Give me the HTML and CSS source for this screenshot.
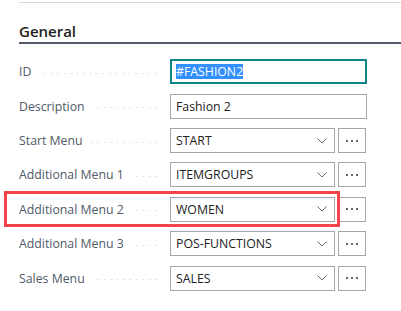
FILE: index.html
```html
<!DOCTYPE html>
<html lang="en">
<head>
    <meta charset="UTF-8">
    <title>General</title>
    <link rel="stylesheet" href="styles.css">
</head>
<body>
    <div class="page">
        <div class="section">
            <h2 class="section-title">General</h2>
            <div class="fields">
                <div class="row">
                    <div class="label"><span>ID</span></div>
                    <div class="box focused"><span class="selected">#FASHION2</span></div>
                </div>
                <div class="row">
                    <div class="label"><span>Description</span></div>
                    <div class="box">Fashion 2</div>
                </div>
                <div class="row">
                    <div class="label"><span>Start Menu</span></div>
                    <div class="box select">START<svg class="chev" viewBox="0 0 10 6"><path d="M0.5 0.5 L5 5 L9.5 0.5"/></svg></div>
                    <div class="more"><i></i><i></i><i></i></div>
                </div>
                <div class="row">
                    <div class="label"><span>Additional Menu 1</span></div>
                    <div class="box select">ITEMGROUPS<svg class="chev" viewBox="0 0 10 6"><path d="M0.5 0.5 L5 5 L9.5 0.5"/></svg></div>
                    <div class="more"><i></i><i></i><i></i></div>
                </div>
                <div class="row marked">
                    <div class="label"><span>Additional Menu 2</span></div>
                    <div class="box select">WOMEN<svg class="chev" viewBox="0 0 10 6"><path d="M0.5 0.5 L5 5 L9.5 0.5"/></svg></div>
                    <div class="more"><i></i><i></i><i></i></div>
                    <div class="highlight"></div>
                </div>
                <div class="row">
                    <div class="label"><span>Additional Menu 3</span></div>
                    <div class="box select">POS-FUNCTIONS<svg class="chev" viewBox="0 0 10 6"><path d="M0.5 0.5 L5 5 L9.5 0.5"/></svg></div>
                    <div class="more"><i></i><i></i><i></i></div>
                </div>
                <div class="row">
                    <div class="label"><span>Sales Menu</span></div>
                    <div class="box select">SALES<svg class="chev" viewBox="0 0 10 6"><path d="M0.5 0.5 L5 5 L9.5 0.5"/></svg></div>
                    <div class="more"><i></i><i></i><i></i></div>
                </div>
            </div>
        </div>
    </div>
</body>
</html>
```

FILE: styles.css
```css
body {
    margin: 0;
    font-family: "Segoe UI", "Open Sans", "Liberation Sans", sans-serif;
    font-size: 12.3px;
    color: #212121;
    background: #fff;
}
.page {
    padding-top: 2px;
}
.section {
    margin-left: 19px;
    border-top: 1px solid #d8d6de;
}
.section-title {
    margin: 0;
    padding-top: 17px;
    height: 22px;
    line-height: 22px;
    font-size: 15px;
    font-weight: 600;
    color: #212121;
    border-bottom: 2px solid #505c6d;
}
.fields {
    padding-top: 15.3px;
}
.row {
    display: flex;
    align-items: center;
    height: 25px;
    margin-bottom: 9.4px;
}
.marked {
    position: relative;
}
.label {
    width: 151px;
    flex: none;
    display: flex;
    align-items: center;
    color: #505a68;
    overflow: hidden;
}
.label span {
    white-space: nowrap;
}
.label::after {
    content: "";
    flex: 1;
    height: 1px;
    margin: 3px 8px 0 8px;
    background-image: linear-gradient(to right, #c6c6c6 1px, transparent 1px);
    background-size: 6.5px 1px;
    background-position: right;
}
.box {
    box-sizing: border-box;
    width: 197px;
    height: 25px;
    border: 1px solid #a6a6a6;
    padding: 0 5px;
    line-height: 23px;
    display: flex;
    align-items: center;
    white-space: nowrap;
}
.focused {
    border: 2px solid #0f8586;
    padding: 0 4px;
}
.selected {
    background: #3390ff;
    color: #fff;
    line-height: 15px;
}
.select {
    width: 165px;
    justify-content: space-between;
}
.chev {
    width: 10px;
    height: 6px;
    margin-right: 2px;
    fill: none;
    stroke: #6b6b6b;
    stroke-width: 1;
}
.more {
    box-sizing: border-box;
    width: 28px;
    height: 25px;
    margin-left: 3px;
    border: 1px solid #a6a6a6;
    display: flex;
    align-items: center;
    justify-content: center;
    gap: 3px;
}
.more i {
    width: 2px;
    height: 2px;
    border-radius: 1px;
    background: #333;
}
.highlight {
    position: absolute;
    left: -15px;
    top: -6px;
    width: 336px;
    height: 36px;
    box-sizing: border-box;
    border: 3px solid #f2444a;
}
```
